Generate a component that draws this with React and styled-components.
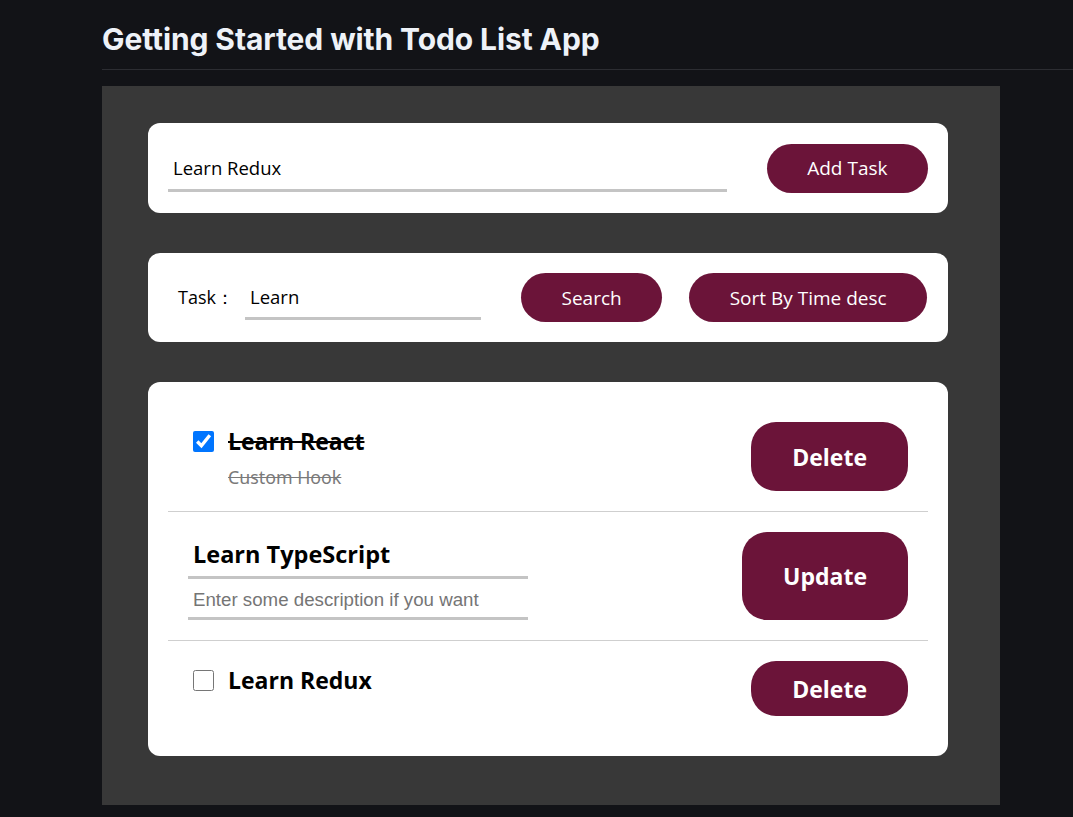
import React, { useState } from "react";
import styled, { createGlobalStyle, css } from "styled-components";

const GlobalStyle = createGlobalStyle`
  html, body {
    margin: 0;
    padding: 0;
    background: #121317;
  }
  body {
    font-family: "Open Sans", "Noto Sans", sans-serif;
  }
  * { box-sizing: border-box; }
`;

const Page = styled.div`
  min-height: 817px;
  padding-left: 102px;
  background: #121317;
`;

const Title = styled.h1`
  margin: 0;
  padding: 22px 0 13px;
  font-family: Inter, "Liberation Sans", sans-serif;
  font-weight: 700;
  font-size: 30px;
  line-height: 34px;
  color: #eef2f8;
  border-bottom: 1px solid #2c2d32;
  letter-spacing: -0.1px;
`;

const Panel = styled.main`
  width: 898px;
  margin-top: 16px;
  background: #383838;
  padding: 37px 52px 49px 46px;
  display: flex;
  flex-direction: column;
  gap: 40px;
`;

const Card = styled.section`
  width: 800px;
  background: #ffffff;
  border-radius: 12px;
  display: flex;
  align-items: center;
`;

const AddCard = styled(Card)`
  height: 90px;
  padding: 0 20px;
`;

const SearchCard = styled(Card)`
  height: 89px;
  padding: 0 20px 0 30px;
`;

const ListCard = styled(Card)`
  flex-direction: column;
  align-items: stretch;
  padding: 20px;
`;

const LineInput = styled.input`
  border: none;
  border-bottom: 3px solid #c4c4c4;
  outline: none;
  background: transparent;
  padding: 0 5px;
  font-family: "Open Sans", "Noto Sans", sans-serif;
  font-size: 18.5px;
  color: #000;
  height: ${(p) => p.$h || 45}px;
  ${(p) => p.$w && css`width: ${p.$w}px;`}
  ${(p) => p.$grow && css`flex: 1;`}
`;

const Pill = styled.button`
  border: none;
  background: #6b1439;
  color: #ffffff;
  border-radius: 25px;
  font-family: "Open Sans", "Noto Sans", sans-serif;
  font-size: ${(p) => (p.$big ? 23 : 19)}px;
  font-weight: ${(p) => (p.$big ? 700 : 400)};
  padding: 0 ${(p) => (p.$big ? 41 : 40.5)}px;
  height: ${(p) => (p.$big ? "auto" : "49px")};
  min-height: ${(p) => (p.$big ? "55px" : "0")};
  flex-shrink: 0;
  cursor: pointer;
  margin-left: ${(p) => p.$ml || 0}px;
`;

const Label = styled.label`
  font-size: 18px;
  color: #000;
  width: 67px;
  flex-shrink: 0;
`;

const Row = styled.div`
  display: flex;
  align-items: stretch;
  justify-content: space-between;
  padding: 20px 20px 20px 25px;
  & + & {
    border-top: 1px solid #cfcfcf;
  }
`;

const TaskInfo = styled.div`
  display: flex;
  flex-direction: column;
`;

const TitleLine = styled.div`
  display: flex;
  align-items: center;
  height: 38px;
  gap: 14px;
`;

const Check = styled.input`
  width: 21px;
  height: 21px;
  margin: 0;
  flex-shrink: 0;
`;

const TaskName = styled.span`
  font-family: "Open Sans", "Noto Sans", sans-serif;
  font-weight: 700;
  font-size: 23px;
  color: #000;
  text-decoration: ${(p) => (p.$done ? "line-through" : "none")};
  text-decoration-thickness: 2px;
`;

const TaskDesc = styled.span`
  font-family: "Noto Sans", "Open Sans", sans-serif;
  font-size: 17.8px;
  color: #7a7a7a;
  padding: 4px 0 0 35px;
  line-height: 27px;
  text-decoration: line-through;
`;

const EditBox = styled.div`
  display: flex;
  flex-direction: column;
  width: 340px;
  margin-left: -5px;
`;

const EditTitle = styled(LineInput)`
  font-weight: 700;
  font-size: 23.5px;
  height: 47px;
`;

const EditDesc = styled(LineInput)`
  font-family: "Liberation Sans", Arial, sans-serif;
  font-size: 18.7px;
  height: 41px;
  padding-top: 3px;
  &::placeholder {
    color: #757575;
  }
`;

const AddInput = styled(LineInput)`
  height: 47px;
  margin-top: 1px;
`;

export default function App() {
  const [todos] = useState([
    { id: 1, title: "Learn React", desc: "Custom Hook", done: true },
    { id: 2, title: "Learn TypeScript", editing: true },
    { id: 3, title: "Learn Redux", done: false },
  ]);

  return (
    <>
      <GlobalStyle />
      <Page>
        <Title>Getting Started with Todo List App</Title>
        <Panel>
          <AddCard>
            <AddInput $grow defaultValue="Learn Redux" />
            <Pill $ml={40}>Add Task</Pill>
          </AddCard>
          <SearchCard>
            <Label>Task：</Label>
            <LineInput $w={236} $h={44} defaultValue="Learn" />
            <Pill $ml={40}>Search</Pill>
            <Pill $ml={27}>Sort By Time desc</Pill>
          </SearchCard>
          <ListCard>
            {todos.map((t) =>
              t.editing ? (
                <Row key={t.id}>
                  <EditBox>
                    <EditTitle defaultValue={t.title} />
                    <EditDesc placeholder="Enter some description if you want" />
                  </EditBox>
                  <Pill $big>Update</Pill>
                </Row>
              ) : (
                <Row key={t.id}>
                  <TaskInfo>
                    <TitleLine>
                      <Check type="checkbox" defaultChecked={t.done} />
                      <TaskName $done={t.done}>{t.title}</TaskName>
                    </TitleLine>
                    {t.desc && <TaskDesc>{t.desc}</TaskDesc>}
                  </TaskInfo>
                  <Pill $big>Delete</Pill>
                </Row>
              )
            )}
          </ListCard>
        </Panel>
      </Page>
    </>
  );
}
